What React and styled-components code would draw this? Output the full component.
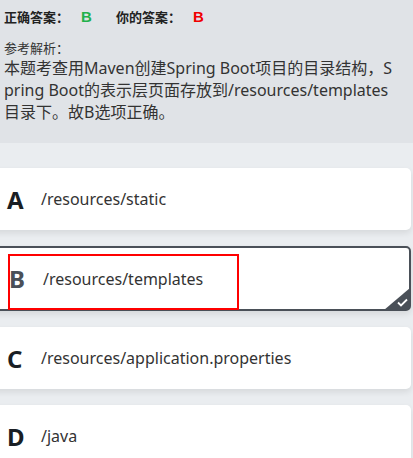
import React from 'react';
import styled, {createGlobalStyle, css} from 'styled-components';

const GlobalStyle = createGlobalStyle`
  html, body {
    margin: 0;
    padding: 0;
    background: #eaedf0;
    font-family: "Noto Sans", "Noto Sans CJK SC", sans-serif;
    overflow: hidden;
  }
`;

const Page = styled.div`
  width: 413px;
  height: 458px;
  overflow: hidden;
`;

const AnalysisPanel = styled.div`
  background: #e0e3e7;
  padding: 8px 4px 0 4px;
  height: 135px;
`;

const AnswerRow = styled.div`
  display: flex;
  align-items: center;
  font-size: 13px;
  font-weight: bold;
  color: #222;
  line-height: 18px;
`;

const AnswerLabel = styled.span`
  white-space: nowrap;
`;

const AnswerLetter = styled.span`
  font-family: "Liberation Sans", sans-serif;
  font-size: 15px;
  color: ${props => props.color};
  width: 35px;
  margin-left: 12px;
`;

const AnalysisTitle = styled.div`
  margin-top: 13px;
  font-size: 13px;
  color: #333;
  line-height: 18px;
`;

const AnalysisText = styled.div`
  font-size: 16px;
  color: #333;
  line-height: 22px;
  width: 397px;
  word-break: break-all;
`;

const OptionList = styled.div`
  display: flex;
  flex-direction: column;
  gap: 16px;
  padding-top: 25px;
`;

const OptionCard = styled.div`
  position: relative;
  box-sizing: border-box;
  display: flex;
  align-items: center;
  height: 62px;
  margin: 0 2px 0 -10px;
  padding-left: 17px;
  background: #fff;
  border-radius: 5px;
  box-shadow: 0 3px 6px rgba(0, 0, 0, 0.09);
  ${props => props.selected && css`
    height: 65px;
    border: 2px solid #4a5058;
  `}
`;

const OptionLetter = styled.span`
  width: 34px;
  font-size: 24px;
  font-weight: bold;
  color: ${props => props.selected ? '#4a5058' : '#1a1e24'};
`;

const OptionText = styled.span`
  font-size: 16px;
  color: #333;
`;

const CheckCorner = styled.div`
  position: absolute;
  right: -1px;
  bottom: -1px;
  width: 26px;
  height: 22px;
  background: #4a5058;
  clip-path: polygon(100% 0, 100% 100%, 0 100%);
  border-bottom-right-radius: 4px;
  svg {
    position: absolute;
    right: 2px;
    bottom: 3px;
  }
`;

const Highlight = styled.div`
  position: absolute;
  left: 16px;
  top: 6px;
  width: 231px;
  height: 56px;
  box-sizing: border-box;
  border: 2px solid #ff0000;
  pointer-events: none;
`;

const options = [
    {key: 'A', text: '/resources/static'},
    {key: 'B', text: '/resources/templates', selected: true},
    {key: 'C', text: '/resources/application.properties'},
    {key: 'D', text: '/java'}
];

const App = () => {
    return (
        <Page>
            <GlobalStyle/>
            <AnalysisPanel>
                <AnswerRow>
                    <AnswerLabel>正确答案：</AnswerLabel>
                    <AnswerLetter color="#22b14c">B</AnswerLetter>
                    <AnswerLabel>你的答案：</AnswerLabel>
                    <AnswerLetter color="#f00000">B</AnswerLetter>
                </AnswerRow>
                <AnalysisTitle>参考解析：</AnalysisTitle>
                <AnalysisText>
                    本题考查用Maven创建Spring Boot项目的目录结构，Spring Boot的表示层页面存放到/resources/templates目录下。故B选项正确。
                </AnalysisText>
            </AnalysisPanel>
            <OptionList>
                {options.map(option => (
                    <OptionCard key={option.key} selected={option.selected}>
                        <OptionLetter selected={option.selected}>{option.key}</OptionLetter>
                        <OptionText>{option.text}</OptionText>
                        {option.selected && (
                            <>
                                <Highlight/>
                                <CheckCorner>
                                    <svg width="11" height="9" viewBox="0 0 11 9">
                                        <path d="M1 4.5 L4 7.5 L10 1.5" fill="none" stroke="#fff" strokeWidth="1.8"/>
                                    </svg>
                                </CheckCorner>
                            </>
                        )}
                    </OptionCard>
                ))}
            </OptionList>
        </Page>
    );
};

export default App;
